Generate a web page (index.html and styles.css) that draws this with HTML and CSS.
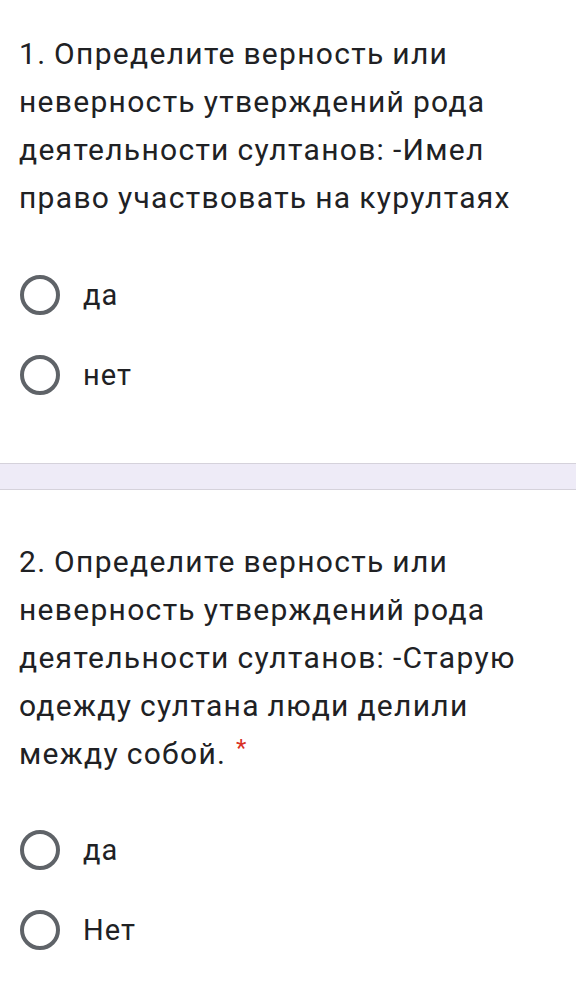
FILE: index.html
```html
<!DOCTYPE html>
<html lang="ru">
<head>
<meta charset="utf-8">
<link rel="stylesheet" href="styles.css">
</head>
<body>
<section class="question q1">
  <div class="title">1. Определите верность или неверность утверждений рода деятельности султанов: -Имел право участвовать на курултаях</div>
  <div class="options">
    <div class="option"><span class="radio"></span><span class="label">да</span></div>
    <div class="option"><span class="radio"></span><span class="label">нет</span></div>
  </div>
</section>
<div class="band"></div>
<section class="question q2">
  <div class="title">2. Определите верность или неверность утверждений рода деятельности султанов: -Старую одежду султана люди делили между собой. <span class="req">*</span></div>
  <div class="options">
    <div class="option"><span class="radio"></span><span class="label">да</span></div>
    <div class="option"><span class="radio"></span><span class="label">Нет</span></div>
  </div>
</section>
</body>
</html>
```
FILE: styles.css
```css
html, body {
  margin: 0;
  padding: 0;
  background: #ffffff;
}
body {
  width: 576px;
  font-family: Roboto, "Noto Sans", Arial, sans-serif;
  color: #202124;
}
.question {
  padding: 0 14px 0 19px;
}
.q1 {
  padding-top: 30px;
  padding-bottom: 48px;
}
.q2 {
  padding-top: 48px;
}
.title {
  font-size: 30px;
  line-height: 48px;
  letter-spacing: 1.3px;
  word-spacing: -1px;
}
.req {
  color: #d93025;
  font-size: 24px;
  line-height: 1;
  vertical-align: 8px;
  margin-left: 2px;
}
.options {
  margin-top: 33px;
  display: flex;
  flex-direction: column;
}
.q2 .options {
  margin-top: 32px;
}
.option {
  height: 80px;
  display: flex;
  align-items: center;
}
.radio {
  box-sizing: border-box;
  width: 40px;
  height: 40px;
  border: 4px solid #5f6368;
  border-radius: 50%;
  margin-left: 1px;
  flex: none;
}
.label {
  font-size: 29px;
  letter-spacing: 1px;
  margin-left: 23px;
}
.band {
  height: 25px;
  background: #eeebf7;
  border-top: 1px solid #d5d2db;
  border-bottom: 1px solid #d5d2db;
}
```
